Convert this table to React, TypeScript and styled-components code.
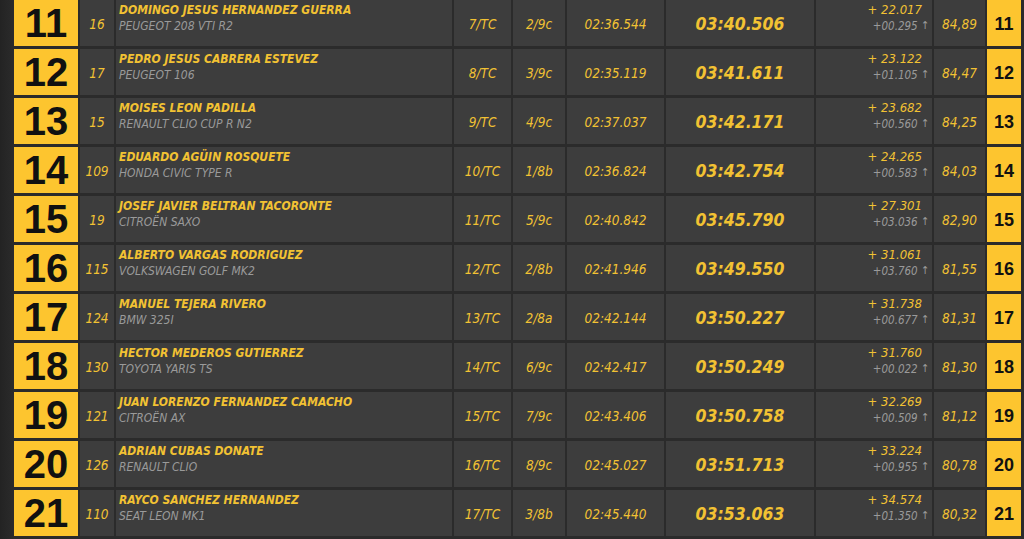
import React from 'react';
import styled, { createGlobalStyle } from 'styled-components';

const COLORS = {
  bg: '#2b2b2b',
  cell: '#3d3d3d',
  yellow: '#fdc52f',
  gold: '#f2c233',
  grey: '#9a9a9a',
  black: '#111111',
};

const FONT = `"DejaVu Sans Condensed", "DejaVu Sans", sans-serif`;

interface Entry {
  pos: number;
  dorsal: string;
  driver: string;
  car: string;
  overall: string;
  klass: string;
  stage: string;
  total: string;
  gap: string;
  diff: string;
  speed: string;
}

const ROWS: Entry[] = [
  { pos: 11, dorsal: '16', driver: 'DOMINGO JESUS HERNANDEZ GUERRA', car: 'PEUGEOT 208 VTI R2', overall: '7/TC', klass: '2/9c', stage: '02:36.544', total: '03:40.506', gap: '+ 22.017', diff: '+00.295', speed: '84,89' },
  { pos: 12, dorsal: '17', driver: 'PEDRO JESUS CABRERA ESTEVEZ', car: 'PEUGEOT 106', overall: '8/TC', klass: '3/9c', stage: '02:35.119', total: '03:41.611', gap: '+ 23.122', diff: '+01.105', speed: '84,47' },
  { pos: 13, dorsal: '15', driver: 'MOISES LEON PADILLA', car: 'RENAULT CLIO CUP R N2', overall: '9/TC', klass: '4/9c', stage: '02:37.037', total: '03:42.171', gap: '+ 23.682', diff: '+00.560', speed: '84,25' },
  { pos: 14, dorsal: '109', driver: 'EDUARDO AGÜIN ROSQUETE', car: 'HONDA CIVIC TYPE R', overall: '10/TC', klass: '1/8b', stage: '02:36.824', total: '03:42.754', gap: '+ 24.265', diff: '+00.583', speed: '84,03' },
  { pos: 15, dorsal: '19', driver: 'JOSEF JAVIER BELTRAN TACORONTE', car: 'CITROËN SAXO', overall: '11/TC', klass: '5/9c', stage: '02:40.842', total: '03:45.790', gap: '+ 27.301', diff: '+03.036', speed: '82,90' },
  { pos: 16, dorsal: '115', driver: 'ALBERTO VARGAS RODRIGUEZ', car: 'VOLKSWAGEN GOLF MK2', overall: '12/TC', klass: '2/8b', stage: '02:41.946', total: '03:49.550', gap: '+ 31.061', diff: '+03.760', speed: '81,55' },
  { pos: 17, dorsal: '124', driver: 'MANUEL TEJERA RIVERO', car: 'BMW 325I', overall: '13/TC', klass: '2/8a', stage: '02:42.144', total: '03:50.227', gap: '+ 31.738', diff: '+00.677', speed: '81,31' },
  { pos: 18, dorsal: '130', driver: 'HECTOR MEDEROS GUTIERREZ', car: 'TOYOTA YARIS TS', overall: '14/TC', klass: '6/9c', stage: '02:42.417', total: '03:50.249', gap: '+ 31.760', diff: '+00.022', speed: '81,30' },
  { pos: 19, dorsal: '121', driver: 'JUAN LORENZO FERNANDEZ CAMACHO', car: 'CITROËN AX', overall: '15/TC', klass: '7/9c', stage: '02:43.406', total: '03:50.758', gap: '+ 32.269', diff: '+00.509', speed: '81,12' },
  { pos: 20, dorsal: '126', driver: 'ADRIAN CUBAS DONATE', car: 'RENAULT CLIO', overall: '16/TC', klass: '8/9c', stage: '02:45.027', total: '03:51.713', gap: '+ 33.224', diff: '+00.955', speed: '80,78' },
  { pos: 21, dorsal: '110', driver: 'RAYCO SANCHEZ HERNANDEZ', car: 'SEAT LEON MK1', overall: '17/TC', klass: '3/8b', stage: '02:45.440', total: '03:53.063', gap: '+ 34.574', diff: '+01.350', speed: '80,32' },
];

const App = () => (
  <>
    <GlobalStyle />
    <Board>
      {ROWS.map((r) => (
        <Row key={r.pos}>
          <PosBox>{r.pos}</PosBox>
          <Cell $w={34}>
            <Gold>{r.dorsal}</Gold>
          </Cell>
          <NameCell>
            <Driver>{r.driver}</Driver>
            <Car>{r.car}</Car>
          </NameCell>
          <Cell $w={57}>
            <Gold>{r.overall}</Gold>
          </Cell>
          <Cell $w={52}>
            <Gold>{r.klass}</Gold>
          </Cell>
          <Cell $w={97}>
            <Gold>{r.stage}</Gold>
          </Cell>
          <Cell $w={148}>
            <Total>{r.total}</Total>
          </Cell>
          <DiffCell>
            <GapLine>{r.gap}</GapLine>
            <DiffLine>
              {r.diff}
              <Arrow>↑</Arrow>
            </DiffLine>
          </DiffCell>
          <Cell $w={51}>
            <Gold>{r.speed}</Gold>
          </Cell>
          <SmallPos>{r.pos}</SmallPos>
        </Row>
      ))}
    </Board>
  </>
);

export default App;

const GlobalStyle = createGlobalStyle`
  html, body {
    margin: 0;
    padding: 0;
    background: ${COLORS.bg};
    overflow: hidden;
  }
  body {
    font-family: ${FONT};
  }
`;

const Board = styled.div`
  width: 1024px;
  height: 539px;
  box-sizing: border-box;
  padding-left: 14px;
  display: flex;
  flex-direction: column;
  gap: 3px;
  background: linear-gradient(90deg, #232323 0px, #2a2a2a 12px, ${COLORS.bg} 14px);
`;

const Row = styled.div`
  display: flex;
  gap: 2px;
  height: 46px;
  flex: none;
`;

const Cell = styled.div<{ $w: number }>`
  width: ${(p) => p.$w}px;
  flex: none;
  background: ${COLORS.cell};
  display: flex;
  align-items: center;
  justify-content: center;
`;

const Gold = styled.span`
  color: ${COLORS.gold};
  font-style: italic;
  font-size: 13.5px;
  font-stretch: condensed;
  padding-top: 1px;
`;

const PosBox = styled.div`
  width: 64px;
  flex: none;
  background: ${COLORS.yellow};
  color: ${COLORS.black};
  font-family: "Liberation Sans", Arial, sans-serif;
  font-weight: 700;
  font-size: 40px;
  display: flex;
  align-items: center;
  justify-content: center;
  padding-top: 1px;
  box-sizing: border-box;
`;

const SmallPos = styled(PosBox)`
  width: 34px;
  font-size: 18px;
  padding-top: 2px;
`;

const NameCell = styled.div`
  width: 336px;
  flex: none;
  box-sizing: border-box;
  background: ${COLORS.cell};
  padding: 3px 0 0 3px;
  display: flex;
  flex-direction: column;
  font-style: italic;
`;

const Driver = styled.div`
  color: ${COLORS.gold};
  font-weight: 700;
  font-size: 12px;
  line-height: 14px;
  font-stretch: condensed;
`;

const Car = styled.div`
  color: ${COLORS.grey};
  font-size: 12px;
  line-height: 13px;
  margin-top: 3px;
  font-stretch: condensed;
`;

const Total = styled.span`
  color: ${COLORS.gold};
  font-style: italic;
  font-weight: 700;
  font-size: 17.5px;
  font-stretch: condensed;
  padding-top: 1px;
`;

const DiffCell = styled.div`
  width: 116px;
  flex: none;
  box-sizing: border-box;
  background: ${COLORS.cell};
  padding: 2px 3px 0 0;
  display: flex;
  flex-direction: column;
  align-items: flex-end;
  font-style: italic;
  font-stretch: condensed;
`;

const GapLine = styled.div`
  color: ${COLORS.gold};
  font-size: 13px;
  line-height: 15px;
  margin-right: 7px;
`;

const DiffLine = styled.div`
  color: ${COLORS.grey};
  font-size: 11.5px;
  line-height: 14px;
  margin-top: 2px;
  display: flex;
  align-items: center;
  gap: 3px;
`;

const Arrow = styled.span`
  font-style: normal;
  font-size: 11px;
  color: ${COLORS.grey};
`;
